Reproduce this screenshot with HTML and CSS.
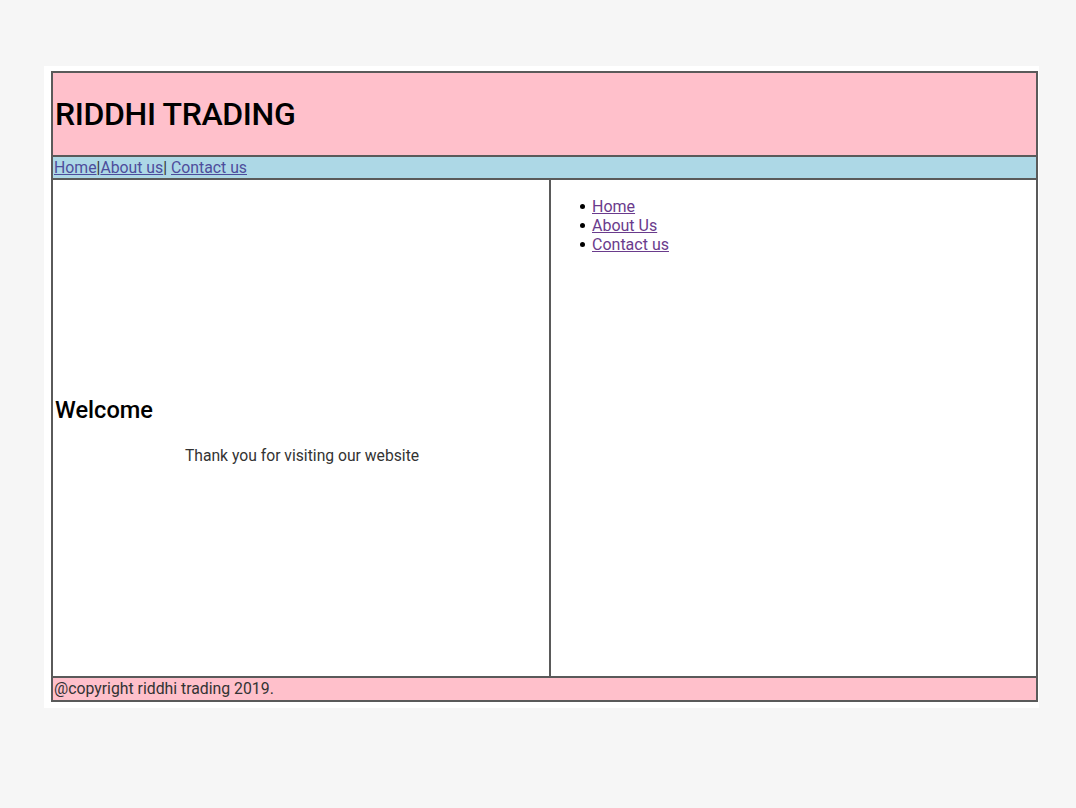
FILE: index.html
```html
<!DOCTYPE html>
<html>
<head>
<meta charset="utf-8">
<link rel="stylesheet" href="styles.css">
<title>Riddhi Trading</title>
</head>
<body>
<div class="sheet">
  <div class="table">
    <div class="cell header"><h1 class="title">RIDDHI TRADING</h1></div>
    <div class="cell nav"><a href="#">Home</a>|<a href="#">About us</a>| <a href="#">Contact us</a></div>
    <div class="cell main">
      <h2 class="welcome">Welcome</h2>
      <p class="thanks">Thank you for visiting our website</p>
    </div>
    <div class="cell side">
      <ul class="links">
        <li><a href="#">Home</a></li>
        <li><a href="#">About Us</a></li>
        <li><a href="#">Contact us</a></li>
      </ul>
    </div>
    <div class="cell footer">@copyright riddhi trading 2019.</div>
  </div>
</div>
</body>
</html>
```

FILE: styles.css
```css
html, body {
  margin: 0;
  padding: 0;
  background: #f6f6f6;
  font-family: Roboto, "Noto Sans", sans-serif;
}
body {
  padding-top: 66px;
  height: 808px;
  box-sizing: border-box;
}
.sheet {
  margin-left: 44px;
  width: 995px;
  background: #fff;
  padding: 5px 1px 6px 7px;
  box-sizing: border-box;
}
.table {
  display: grid;
  grid-template-columns: 496px 485px;
  grid-template-rows: 82px 21px 496px 22px;
  gap: 2px;
  padding: 2px;
  background: #5a5a5a;
  width: 987px;
  box-sizing: border-box;
}
.cell {
  background: #fff;
  min-width: 0;
}
.header {
  grid-column: 1 / 3;
  background: #ffc0cb;
  display: flex;
  align-items: center;
  padding-left: 2px;
}
.title {
  margin: 0;
  font-size: 32px;
  font-weight: 500;
  color: #000;
  letter-spacing: -0.35px;
}
.nav {
  grid-column: 1 / 3;
  background: #add8e6;
  font-size: 15.8px;
  line-height: 21px;
  padding-left: 1px;
  color: #333;
}
.nav a { color: #4d4d9c; }
.main {
  display: flex;
  flex-direction: column;
  justify-content: center;
  padding-left: 2px;
  padding-top: 4px;
}
.welcome {
  margin: 0 0 22px 0;
  font-size: 23.6px;
  font-weight: 500;
  color: #000;
}
.thanks {
  margin: 0;
  text-align: center;
  font-size: 15.7px;
  color: #333;
}
.side {
  padding-top: 17px;
}
.links {
  margin: 0;
  padding-left: 41px;
  font-size: 16px;
  line-height: 19px;
  list-style: none;
}
.links li::before {
  content: "";
  display: inline-block;
  width: 5px;
  height: 5px;
  border-radius: 50%;
  background: #000;
  margin-left: -12px;
  margin-right: 7px;
  vertical-align: 3px;
}
.links a { color: #6a3b8c; }
.footer {
  grid-column: 1 / 3;
  background: #ffc0cb;
  font-size: 15.8px;
  line-height: 22px;
  padding-left: 1px;
  color: #333;
}
```
